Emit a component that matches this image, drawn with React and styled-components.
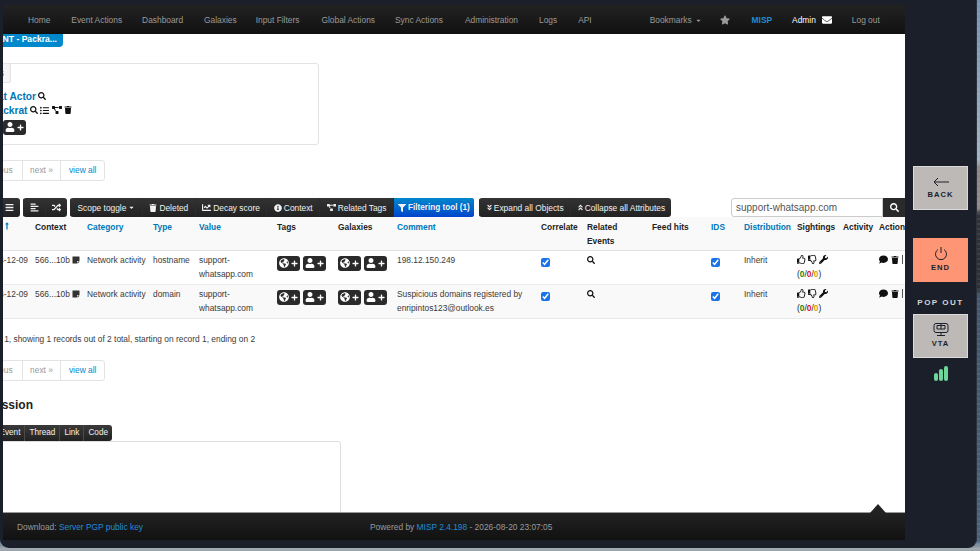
import React from 'react'
import styled, { createGlobalStyle } from 'styled-components'
import {
  FaSearch, FaListUl, FaProjectDiagram, FaTrash, FaGlobeAmericas, FaUser, FaPlus, FaBars, FaAlignLeft,
  FaRandom, FaCaretDown, FaChartLine, FaInfoCircle, FaFilter, FaAngleDoubleDown, FaAngleDoubleUp,
  FaStickyNote, FaRegThumbsUp, FaRegThumbsDown, FaWrench, FaComment, FaEnvelope, FaStar, FaLongArrowAltUp,
} from 'react-icons/fa'

const GlobalStyle = createGlobalStyle`
html, body { margin:0; padding:0; background:#1b1f2a; overflow:hidden; }
* { box-sizing:border-box; }
body { font-family:"Liberation Sans", Arial, sans-serif; font-size:8.4px; color:#3a3a3a; }
`

const Page = styled.div`
width:980px;
height:551px;
overflow:hidden;
background:
  repeating-linear-gradient(rgba(255,255,255,0) 0 3px, rgba(255,255,255,.07) 3px 5px),
  linear-gradient(#6f93b8 0, #9fb2c4 160px, #8d8680 168px, #8f8a84 208px, #2f3338 214px, #2c3036 288px, #3d5870 296px, #45627c 540px, #9aa3aa 548px);
`
const Window = styled.div`
width:977px;
height:548px;
display:flex;
background:#1b1f2a;
border-radius:0 0 9px 9px;
border-right:1px solid #2c3039;
`
const Frame = styled.div`
width:905px;
flex:none;
padding:5px 0 8px 3px;
display:flex;
flex-direction:column;
`
const TopNav = styled.div`
height:29px;
flex:none;
display:flex;
align-items:center;
background:linear-gradient(#222, #111);
font-size:8.4px;
padding:1px 0 0 25px;
`
const NavItem = styled.span`
margin-right:${({ $gap }) => $gap}px;
color:${({ $color }) => $color || '#9a9a9a'};
font-weight:${({ $bold }) => ($bold ? 700 : 400)};
display:flex;
align-items:center;
gap:3px;
white-space:nowrap;
`
const Content = styled.div`
flex:1;
background:#fff;
overflow:hidden;
min-height:0;
`
const Inner = styled.div`
margin-left:-40px;
width:950px;
`
const BlueTab = styled.div`
width:100px;
height:13px;
background:#0088cc;
color:#fff;
font-weight:700;
font-size:8.6px;
line-height:11px;
border-radius:0 0 4px 0;
text-align:right;
padding-right:6px;
white-space:nowrap;
`
const TagBox = styled.div`
margin-top:16px;
width:356px;
height:82px;
border:1px solid #e3e3e3;
border-radius:3px;
display:flex;
flex-direction:column;
`
const BoxTab = styled.div`
width:47px;
height:19px;
background:#f5f5f5;
border-right:1px solid #e3e3e3;
border-bottom:1px solid #e3e3e3;
border-radius:0 0 3px 0;
text-align:right;
padding-right:6px;
line-height:18px;
color:#555;
`
const BoxLine = styled.div`
display:flex;
align-items:center;
gap:2px;
height:14px;
color:#0077b8;
font-weight:700;
font-size:10.2px;
justify-content:flex-end;
width:${({ $w }) => $w}px;
margin-top:${({ $top }) => $top || 0}px;
white-space:nowrap;
`
const BoxIcons = styled.span`
display:flex;
align-items:center;
gap:${({ $gap }) => $gap}px;
color:#111;
`
const Pager = styled.div`
margin-top:${({ $top }) => $top}px;
width:142px;
height:21px;
display:flex;
border:1px solid #e3e3e3;
border-radius:3px;
line-height:19px;
text-align:center;
`
const PageCell = styled.span`
width:${({ $w }) => $w}px;
color:${({ $link }) => ($link ? '#0088cc' : '#999')};
border-left:${({ $first }) => ($first ? 'none' : '1px solid #e3e3e3')};
text-align:${({ $first }) => ($first ? 'right' : 'center')};
white-space:nowrap;
padding-right:${({ $first }) => ($first ? '9px' : '0')};
`
const Toolbar = styled.div`
margin:17px 0 0 35px;
width:907px;
display:flex;
height:19px;
`
const BtnGroup = styled.div`
display:flex;
height:19px;
border-radius:3px;
overflow:hidden;
background:linear-gradient(#333, #222);
margin-right:${({ $gap }) => $gap}px;
`
const ToolBtn = styled.span`
display:flex;
align-items:center;
gap:${({ $tight }) => ($tight ? 1 : 2)}px;
padding:0 ${({ $pad }) => $pad ?? 6.5}px;
color:#f2f2f2;
font-size:${({ $active }) => ($active ? 8.2 : 8.4)}px;
white-space:nowrap;
border-left:1px solid #2c2c2c;
background:${({ $active }) => ($active ? 'linear-gradient(#0088cc, #0044cc)' : 'transparent')};
font-weight:${({ $active }) => ($active ? 700 : 400)};
`
const SearchBar = styled.div`
display:flex;
margin-left:auto;
height:19px;
`
const SearchField = styled.div`
width:152px;
border:1px solid #ccc;
border-radius:3px 0 0 3px;
color:#555;
font-size:10px;
padding-left:4px;
line-height:17px;
background:#fff;
`
const SearchBtn = styled.div`
width:22px;
display:flex;
align-items:center;
justify-content:center;
color:#fff;
background:#2a2a2a;
`
const Table = styled.table`
table-layout:fixed;
border-collapse:collapse;
width:942px;
font-size:8.4px;
`
const HeadCell = styled.th`
height:33px;
background:#f9f9f9;
vertical-align:top;
text-align:${({ $right }) => ($right ? 'right' : 'left')};
padding:3px ${({ $right }) => ($right ? 24 : 0)}px 0 0;
line-height:14px;
font-weight:700;
color:${({ $link }) => ($link ? '#0077b8' : '#222')};
border-bottom:1px solid #e2e2e2;
white-space:nowrap;
`
const Row = styled.tr`
background:${({ $alt }) => ($alt ? '#f9f9f9' : '#fff')};
`
const Cell = styled.td`
height:34px;
vertical-align:top;
padding:2px ${({ $right }) => ($right ? 7 : 0)}px 0 0;
line-height:14px;
text-align:${({ $right }) => ($right ? 'right' : 'left')};
color:#3a3a3a;
border-bottom:1px solid #eaeaea;
white-space:${({ $wrap }) => ($wrap ? 'normal' : 'nowrap')};
`
const TagBtn = styled.span`
display:inline-flex;
align-items:center;
justify-content:center;
gap:2px;
width:23px;
height:15px;
margin:${({ $flat }) => ($flat ? '0' : '3px 3px 0 0')};
color:#fff;
background:#2a2a2a;
border-radius:3px;
vertical-align:top;
`
const Check = styled.input.attrs({ type: 'checkbox', defaultChecked: true, readOnly: true })`
width:9px;
height:9px;
margin:5px 0 0 0;
display:block;
accent-color:#1a73e8;
`
const Counts = styled.div`
color:#222;
line-height:14px;
`
const Green = styled.b`color:#118811;`
const Red = styled.b`color:#dd1111;`
const Orange = styled.b`color:#e89a00;`
const IconRow = styled.div`
display:flex;
align-items:center;
gap:${({ $gap }) => $gap}px;
height:14px;
color:#111;
`
const SearchIcon = styled.span`
display:block;
margin-top:3px;
line-height:0;
color:#111;
`
const EdgeMark = styled.span`
width:1px;
height:9px;
background:#555;
`
const Note = styled.span`
display:inline-block;
vertical-align:-1px;
margin-left:2px;
color:#333;
`
const Summary = styled.p`
margin:13px 0 0 3px;
line-height:14px;
color:#3a3a3a;
`
const Heading = styled.h4`
margin:16px 0 0 6px;
font-size:12px;
line-height:16px;
color:#222;
font-weight:700;
`
const EditorBar = styled.div`
margin-top:12px;
display:flex;
width:149px;
height:16px;
background:linear-gradient(#3a3a3a, #222);
border-radius:3px;
justify-content:flex-end;
`
const EditorBtn = styled.span`
padding:0 4px;
color:#f0f0f0;
font-size:8.2px;
line-height:16px;
border-left:1px solid #4a4a4a;
`
const TextArea = styled.div`
width:378px;
height:90px;
border:1px solid #ddd;
border-radius:3px;
`
const Footer = styled.div`
height:28px;
flex:none;
display:flex;
position:relative;
align-items:center;
background:linear-gradient(#222, #111);
border-top:1px solid #999;
color:#9a9a9a;
font-size:8.4px;
padding:1px 0 0 14px;
`
const FootLink = styled.span`color:#1f8dd6;`
const FootCenter = styled.span`margin-left:227px;`
const Notch = styled.span`
position:absolute;
right:19px;
top:-9px;
width:0;
height:0;
border-left:8px solid transparent;
border-right:8px solid transparent;
border-bottom:9px solid #222;
`
const Side = styled.div`
flex:1;
padding:166px 0 0 8px;
display:flex;
flex-direction:column;
`
const SideBtn = styled.div`
width:55px;
height:44px;
padding-bottom:2px;
background:${({ $end }) => ($end ? '#fe9575' : '#bdb9b7')};
display:flex;
flex-direction:column;
align-items:center;
justify-content:center;
gap:2px;
color:#1b1f2a;
font-size:7.6px;
font-weight:700;
letter-spacing:1px;
margin-bottom:${({ $gap }) => $gap || 0}px;
border:1px solid ${({ $end }) => ($end ? '#fe9575' : '#dcdad8')};
`
const PopOut = styled.div`
width:55px;
text-align:center;
color:#d5d5d5;
font-size:8px;
font-weight:700;
letter-spacing:1.5px;
line-height:10px;
margin-bottom:6px;
white-space:nowrap;
`
const Signal = styled.div`
width:55px;
height:15px;
margin-top:8px;
display:flex;
gap:1px;
justify-content:center;
align-items:flex-end;
`
const Bar = styled.span`
width:4px;
height:${({ $h }) => $h}px;
background:#6fd69a;
border-radius:2px;
`

const heads = [
  ['Date', 1, 72], ['Context', 0, 52], ['Category', 1, 66], ['Type', 1, 46], ['Value', 1, 78], ['Tags', 0, 61],
  ['Galaxies', 0, 59], ['Comment', 1, 144], ['Correlate', 0, 46], ['Related Events', 0, 65], ['Feed hits', 0, 59],
  ['IDS', 1, 33], ['Distribution', 1, 53], ['Sightings', 0, 46], ['Activity', 0, 36], ['Actions', 0, 41],
]

const rows = [
  { type: 'hostname', comment: '198.12.150.249' },
  { type: 'domain', comment: 'Suspicious domains registered by enripintos123@outlook.es' },
]

const headLabel = name => {
  if (name === 'Date') return <>Date <FaLongArrowAltUp size={8} /></>
  if (name === 'Related Events') return <>Related<br />Events</>
  return name
}

const TagButtons = () => <>
  <TagBtn><FaGlobeAmericas size={10} /><FaPlus size={7} /></TagBtn>
  <TagBtn><FaUser size={10} /><FaPlus size={7} /></TagBtn>
</>

const PagerRow = ({ top }) => <Pager $top={top}>
  <PageCell $first $w={58}>« previous</PageCell>
  <PageCell $w={39}>next »</PageCell>
  <PageCell $link $w={44}>view all</PageCell>
</Pager>

const App = () => <Page>
  <GlobalStyle />
  <Window>
    <Frame>
      <TopNav>
        <NavItem $gap={21}>Home</NavItem>
        <NavItem $gap={20}>Event Actions</NavItem>
        <NavItem $gap={21}>Dashboard</NavItem>
        <NavItem $gap={19}>Galaxies</NavItem>
        <NavItem $gap={22}>Input Filters</NavItem>
        <NavItem $gap={20}>Global Actions</NavItem>
        <NavItem $gap={22}>Sync Actions</NavItem>
        <NavItem $gap={21}>Administration</NavItem>
        <NavItem $gap={21}>Logs</NavItem>
        <NavItem $gap={58}>API</NavItem>
        <NavItem $gap={18}>Bookmarks<FaCaretDown size={7} /></NavItem>
        <NavItem $gap={22}><FaStar size={10} /></NavItem>
        <NavItem $gap={20} $bold $color="#1f8dd6">MISP</NavItem>
        <NavItem $gap={6} $color="#fff">Admin</NavItem>
        <NavItem $gap={20} $color="#fff"><FaEnvelope size={10} /></NavItem>
        <NavItem $gap={0}>Log out</NavItem>
      </TopNav>
      <Content>
        <Inner>
          <BlueTab>OSINT - Packra...</BlueTab>
          <TagBox>
            <BoxTab>Galaxies</BoxTab>
            <BoxLine $top={6} $w={82}>Threat Actor <BoxIcons $gap={0}><FaSearch size={8} /></BoxIcons></BoxLine>
            <BoxLine $w={108}>Packrat <BoxIcons $gap={2.5}><FaSearch size={8} /><FaListUl size={9} /><FaProjectDiagram size={10} /><FaTrash size={8} /></BoxIcons></BoxLine>
            <BoxLine $top={3} $w={62}><TagBtn $flat><FaUser size={10} /><FaPlus size={7} /></TagBtn></BoxLine>
          </TagBox>
          <PagerRow top={15} />
          <Toolbar>
            <BtnGroup $gap={3}><ToolBtn $pad={6}><FaBars size={9} /></ToolBtn></BtnGroup>
            <BtnGroup $gap={3}><ToolBtn $pad={6}><FaAlignLeft size={9} /></ToolBtn><ToolBtn $pad={6}><FaRandom size={9} /></ToolBtn></BtnGroup>
            <BtnGroup $gap={5}>
              <ToolBtn>Scope toggle<FaCaretDown size={7} /></ToolBtn>
              <ToolBtn><FaTrash size={8} />Deleted</ToolBtn>
              <ToolBtn><FaChartLine size={9} />Decay score</ToolBtn>
              <ToolBtn><FaInfoCircle size={8} />Context</ToolBtn>
              <ToolBtn><FaProjectDiagram size={9} />Related Tags</ToolBtn>
              <ToolBtn $active $pad={4}><FaFilter size={8} />Filtering tool (1)</ToolBtn>
            </BtnGroup>
            <BtnGroup $gap={0}>
              <ToolBtn $tight $pad={6}><FaAngleDoubleDown size={7} />Expand all Objects</ToolBtn>
              <ToolBtn $tight $pad={6}><FaAngleDoubleUp size={7} />Collapse all Attributes</ToolBtn>
            </BtnGroup>
            <SearchBar>
              <SearchField>support-whatsapp.com</SearchField>
              <SearchBtn><FaSearch size={9} /></SearchBtn>
            </SearchBar>
          </Toolbar>
          <Table>
            <colgroup>{heads.map(h => <col key={h[0]} style={{ width: h[2] }} />)}</colgroup>
            <thead>
              <tr>
                {heads.map(h => <HeadCell key={h[0]} $link={h[1]} $right={h[0] === 'Date'}>{headLabel(h[0])}</HeadCell>)}
              </tr>
            </thead>
            <tbody>
              {rows.map((r, i) => <Row key={r.type} $alt={i === 1}>
                <Cell $right>2024-12-09</Cell>
                <Cell>566...10b<Note><FaStickyNote size={8} /></Note></Cell>
                <Cell>Network activity</Cell>
                <Cell>{r.type}</Cell>
                <Cell $wrap>support-whatsapp.com</Cell>
                <Cell><TagButtons /></Cell>
                <Cell><TagButtons /></Cell>
                <Cell $wrap>{r.comment}</Cell>
                <Cell><Check /></Cell>
                <Cell><SearchIcon><FaSearch size={8} /></SearchIcon></Cell>
                <Cell />
                <Cell><Check /></Cell>
                <Cell>Inherit</Cell>
                <Cell>
                  <IconRow $gap={2}><FaRegThumbsUp size={9} /><FaRegThumbsDown size={9} /><FaWrench size={9} /></IconRow>
                  <Counts>(<Green>0</Green>/<Red>0</Red>/<Orange>0</Orange>)</Counts>
                </Cell>
                <Cell />
                <Cell><IconRow $gap={3}><FaComment size={9} /><FaTrash size={8} /><EdgeMark /></IconRow></Cell>
              </Row>)}
            </tbody>
          </Table>
          <Summary>Page 1 of 1, showing 1 records out of 2 total, starting on record 1, ending on 2</Summary>
          <PagerRow top={14} />
          <Heading>Discussion</Heading>
          <EditorBar>
            <EditorBtn>Event</EditorBtn>
            <EditorBtn>Thread</EditorBtn>
            <EditorBtn>Link</EditorBtn>
            <EditorBtn>Code</EditorBtn>
          </EditorBar>
          <TextArea />
        </Inner>
      </Content>
      <Footer>
        <span>Download: <FootLink>Server PGP public key</FootLink></span>
        <FootCenter>Powered by <FootLink>MISP 2.4.198</FootLink> - 2026-08-20 23:07:05</FootCenter>
        <Notch />
      </Footer>
    </Frame>
    <Side>
      <SideBtn $gap={28}>
        <svg width="18" height="12" viewBox="0 0 18 12" fill="none" stroke="#1b1f2a" strokeWidth="1"><path d="M17 6H2M6 2L2 6l4 4" /></svg>
        BACK
      </SideBtn>
      <SideBtn $end $gap={16}>
        <svg width="14" height="15" viewBox="0 0 14 15" fill="none" stroke="#1b1f2a" strokeWidth="1"><path d="M7 1v6M4 3.5a5.5 5.5 0 1 0 6 0" /></svg>
        END
      </SideBtn>
      <PopOut>POP OUT</PopOut>
      <SideBtn>
        <svg width="16" height="15" viewBox="0 0 16 15" fill="none" stroke="#1b1f2a" strokeWidth="1"><path d="M3 1.5h10a2 2 0 0 1 2 2v5a2 2 0 0 1-2 2H3a2 2 0 0 1-2-2v-5a2 2 0 0 1 2-2zM4 3.5h8v3.5H4zM8 2v5M8 10.5V13M4 13.5h8" /></svg>
        VTA
      </SideBtn>
      <Signal><Bar $h={8} /><Bar $h={12} /><Bar $h={15} /></Signal>
    </Side>
  </Window>
</Page>

export default App
